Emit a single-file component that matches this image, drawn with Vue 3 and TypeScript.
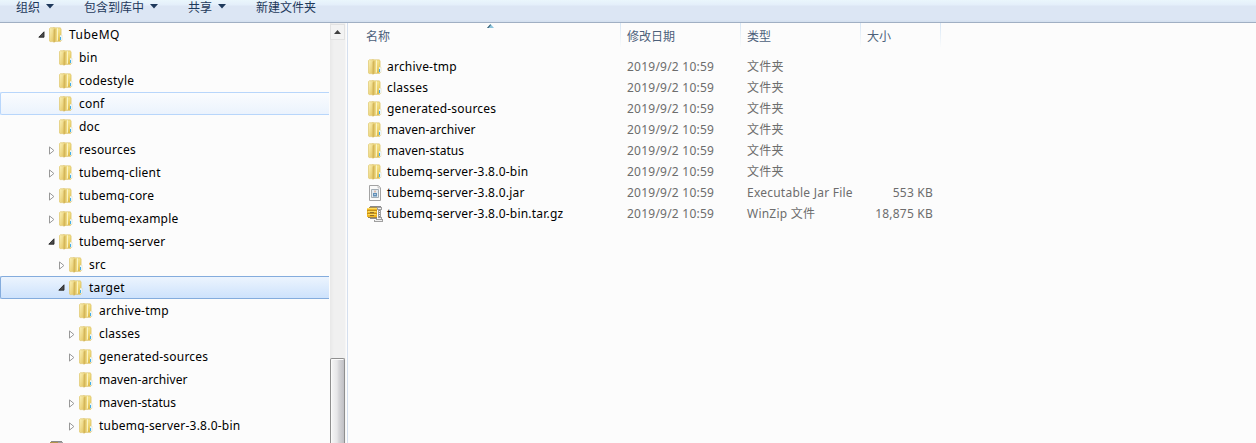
<script setup lang="ts">
interface TreeNode {
  name: string
  level: number
  state?: 'open' | 'closed'
  look?: 'hover' | 'selected'
}
interface FileRow {
  name: string
  icon: 'folder' | 'jar' | 'zip'
  type: string
  size?: string
}

const menus = [
  { label: '组织', arrow: true },
  { label: '包含到库中', arrow: true },
  { label: '共享', arrow: true },
  { label: '新建文件夹', arrow: false },
]

const tree: TreeNode[] = [
  { name: 'TubeMQ', level: 0, state: 'open' },
  { name: 'bin', level: 1 },
  { name: 'codestyle', level: 1 },
  { name: 'conf', level: 1, look: 'hover' },
  { name: 'doc', level: 1 },
  { name: 'resources', level: 1, state: 'closed' },
  { name: 'tubemq-client', level: 1, state: 'closed' },
  { name: 'tubemq-core', level: 1, state: 'closed' },
  { name: 'tubemq-example', level: 1, state: 'closed' },
  { name: 'tubemq-server', level: 1, state: 'open' },
  { name: 'src', level: 2, state: 'closed' },
  { name: 'target', level: 2, state: 'open', look: 'selected' },
  { name: 'archive-tmp', level: 3 },
  { name: 'classes', level: 3, state: 'closed' },
  { name: 'generated-sources', level: 3, state: 'closed' },
  { name: 'maven-archiver', level: 3 },
  { name: 'maven-status', level: 3, state: 'closed' },
  { name: 'tubemq-server-3.8.0-bin', level: 3, state: 'closed' },
]

const columns = ['名称', '修改日期', '类型', '大小']
const date = '2019/9/2 10:59'

const files: FileRow[] = [
  { name: 'archive-tmp', icon: 'folder', type: '文件夹' },
  { name: 'classes', icon: 'folder', type: '文件夹' },
  { name: 'generated-sources', icon: 'folder', type: '文件夹' },
  { name: 'maven-archiver', icon: 'folder', type: '文件夹' },
  { name: 'maven-status', icon: 'folder', type: '文件夹' },
  { name: 'tubemq-server-3.8.0-bin', icon: 'folder', type: '文件夹' },
  { name: 'tubemq-server-3.8.0.jar', icon: 'jar', type: 'Executable Jar File', size: '553 KB' },
  { name: 'tubemq-server-3.8.0-bin.tar.gz', icon: 'zip', type: 'WinZip 文件', size: '18,875 KB' },
]

// Letter tracking by label; hyphenated "maven" names are set tighter than the rest.
function tracking(name: string): string {
  if (name === 'TubeMQ') return 'wide'
  return name.startsWith('maven') ? 'tight' : ''
}
</script>

<template>
  <div class="window">
    <svg class="defs" width="0" height="0">
      <defs>
        <linearGradient id="gBack" x1="0" y1="0" x2="1" y2="1">
          <stop offset="0" stop-color="#fbf2b8" />
          <stop offset="1" stop-color="#e2c35e" />
        </linearGradient>
        <linearGradient id="gRight" x1="0" y1="0" x2="0" y2="1">
          <stop offset="0" stop-color="#f5e591" />
          <stop offset=".6" stop-color="#ebd068" />
          <stop offset="1" stop-color="#dcb846" />
        </linearGradient>
        <linearGradient id="gFlap" x1="0" y1="0" x2="1" y2="0">
          <stop offset="0" stop-color="#c9a84a" />
          <stop offset=".45" stop-color="#dec266" />
          <stop offset="1" stop-color="#f3e08a" />
        </linearGradient>
        <symbol id="folder" viewBox="0 0 14 16">
          <path d="M4 .9h7.2l.8.8v5.8l.7 1v4.8l-.9.9H4z" fill="url(#gRight)" stroke="#dcc05f" stroke-width=".8" />
          <path d="M.5 1.5 1.3.8H5.5v13.8H1L.5 14z" fill="url(#gBack)" stroke="#e2cb78" stroke-width=".8" />
          <path d="M4.7 2.6 8 1.2v12.6l-3.3 1.9z" fill="url(#gFlap)" />
          <path d="M8 1.3h.9v12.5H8z" fill="#fcf6cc" />
          <path d="M11 8.6q.9-1.2 2 0v4.9h-2z" fill="#e9f4f7" />
          <path d="M11 10h1v3h-1z" fill="#45aee6" />
        </symbol>
        <symbol id="jar" viewBox="0 0 16 16">
          <path d="M2.5.5h8.8l2.2 2.2v12.8h-11z" fill="#fafafa" stroke="#a3a3a3" />
          <path d="M11 .8v2.2h2.3" fill="#e5e5e5" stroke="#b5b5b5" stroke-width=".7" />
          <path d="M4.5 4.5h7v8h-7z" fill="#e3eaf0" stroke="#a3adb5" />
          <path d="M6 8h4v3.5H6z" fill="#6290b8" />
          <path d="M7.5 5.5h1v2h-1z" fill="#d58f72" />
          <path d="M7 9h2v1H7z" fill="#a9c6de" />
        </symbol>
        <symbol id="zip" viewBox="0 0 16 16">
          <path d="M3 0h11v1H3z" fill="#8a8a8a" />
          <path d="M2 1h8v1H2z" fill="#b0934a" />
          <path d="M0 2h10v9H0z" fill="#efb622" />
          <path d="M0 2h10v1H0zM1 5h8v1H1zM1 8h8v1H1z" fill="#fcdc62" />
          <path d="M0 4h10v1H0zM0 7h10v1H0z" fill="#c3911b" />
          <path d="M3 6h4v1H3zM3 9h4v1H3z" fill="#91702a" />
          <path d="M1 11h9v1H1z" fill="#9c8450" />
          <path d="M3 12h7v1H3z" fill="#8e8e8e" />
          <path d="M10 1h5v3h-1v7h1v2h1v3H7v-2h2v-1h2V4h-1z" fill="#a0a0a0" />
          <path d="M11 2h3v1h-3zM12 4h1v7h-1zM11 12h3v1h-3zM8 14h7v1H8z" fill="#f0f0f0" />
          <path d="M12.5 4v7" stroke="#888" stroke-dasharray="1 1" />
        </symbol>
      </defs>
    </svg>

    <nav class="toolbar">
      <span v-for="m in menus" :key="m.label" class="menu">
        {{ m.label }}
        <svg v-if="m.arrow" class="drop" width="8" height="5" viewBox="0 0 8 5">
          <path d="M0 0h8L4 4.5z" fill="#1e395b" />
        </svg>
      </span>
    </nav>

    <div class="body">
      <aside class="tree">
        <div v-for="n in tree" :key="n.level + n.name" class="node" :class="['level' + n.level, n.look]">
          <span class="twisty">
            <svg v-if="n.state === 'open'" width="7" height="7" viewBox="0 0 7 7">
              <path d="M6 .8v5.4H.8z" fill="#4a4a4a" stroke="#262626" stroke-width=".9" />
            </svg>
            <svg v-else-if="n.state === 'closed'" class="closed" width="6" height="9" viewBox="0 0 6 9">
              <path d="M.5.9v7.2l4.4-3.6z" fill="#fff" stroke="#989898" />
            </svg>
          </span>
          <svg class="folder" width="14" height="16"><use href="#folder" /></svg>
          <span class="label" :class="tracking(n.name)">{{ n.name }}</span>
        </div>
        <div class="node level0 partial">
          <span class="twisty"></span>
          <svg class="zip" width="16" height="16"><use href="#zip" /></svg>
        </div>
      </aside>

      <div class="scrollbar">
        <div class="up">
          <svg width="7" height="4" viewBox="0 0 7 4"><path d="M0 4 3.5 0 7 4z" fill="#404040" /></svg>
        </div>
        <div class="track"></div>
        <div class="thumb"></div>
      </div>

      <main class="list">
        <header class="row head">
          <span v-for="(c, i) in columns" :key="c" class="col">
            {{ c }}
            <svg v-if="i === 0" class="sort" width="7" height="4" viewBox="0 0 7 4">
              <path d="M0 4 3.5 0 7 4z" fill="#8cc4dd" />
              <path d="M0 4 3.5 0v1.5L1.5 4z" fill="#3c5e72" />
            </svg>
          </span>
        </header>
        <div v-for="f in files" :key="f.name" class="row file">
          <span class="name">
            <svg :class="f.icon" :width="f.icon === 'folder' ? 14 : 16" height="16">
              <use :href="'#' + f.icon" />
            </svg>
            <span class="label" :class="tracking(f.name)">{{ f.name }}</span>
          </span>
          <span class="cell">{{ date }}</span>
          <span class="cell">{{ f.type }}</span>
          <span class="size">{{ f.size }}</span>
        </div>
      </main>
    </div>
  </div>
</template>

<style>
body {
  margin: 0;
  overflow: hidden;
}
</style>

<style scoped>
.window {
  width: 1256px;
  height: 443px;
  overflow: hidden;
  display: flex;
  flex-direction: column;
  background: #fcfcfc;
  font: 12px/16px "Noto Sans", "Open Sans", "Noto Sans CJK SC", sans-serif;
  color: #000;
  white-space: nowrap;
}
.window svg {
  flex: none;
  display: block;
}
.defs {
  position: absolute;
}
.toolbar {
  box-sizing: border-box;
  flex: none;
  height: 23px;
  padding-left: 16px;
  display: flex;
  gap: 30px;
  background: linear-gradient(#eaf6fc 0, #e4effa 5px, #dce6f4 6px, #dce6f4 20px, #d5e1f0 21px);
  border-bottom: 1px solid #a0afc3;
  color: #1e395b;
  font-family: "Noto Sans CJK SC", sans-serif;
  line-height: 14px;
}
.menu {
  display: flex;
  height: 14px;
  align-items: center;
  gap: 6px;
}
.drop {
  margin-top: -2px;
}
.body {
  flex: 1;
  min-height: 0;
  display: flex;
}
.tree {
  width: 330px;
  overflow: hidden;
}
.node {
  box-sizing: border-box;
  width: 329px;
  height: 23px;
  display: flex;
  align-items: center;
  border: 1px solid transparent;
  border-right: 0;
  border-radius: 2px 0 0 2px;
}
.level0 { padding-left: 37px; }
.level1 { padding-left: 47px; }
.level2 { padding-left: 57px; }
.level3 { padding-left: 67px; }
.hover {
  background: linear-gradient(#fafcfe, #ebf3fd);
  border-color: #b8d6fb;
}
.selected {
  background: linear-gradient(#ecf4fe, #cde2fc);
  border-color: #84acdd;
}
.twisty {
  width: 11px;
  flex: none;
}
.closed {
  margin-left: 1px;
  margin-top: 1px;
}
.node .folder {
  margin-right: 6px;
}
.node .zip {
  margin-left: -1px;
}
.label {
  letter-spacing: 0.22px;
}
.label.tight {
  letter-spacing: 0.06px;
}
.label.wide {
  letter-spacing: 0.5px;
}
.scrollbar {
  width: 17px;
  flex: none;
  display: flex;
  flex-direction: column;
  background: linear-gradient(90deg, #e8e8e8, #f0f0f0 4px, #f0f0f0 15px, #fcfcfc 16px);
}
.up {
  box-sizing: border-box;
  width: 15px;
  height: 16px;
  margin-top: 1px;
  display: flex;
  align-items: center;
  justify-content: center;
  background: #f3f3f3;
  border: 1px solid #e2e2e2;
}
.track {
  height: 318px;
}
.thumb {
  box-sizing: border-box;
  width: 15px;
  flex: 1;
  border: 1px solid #8f8f8f;
  border-bottom: 0;
  border-radius: 2px 2px 0 0;
  background: linear-gradient(90deg, #f6f6f6, #e6e6e8 6px, #d5d5d8 8px, #c0c0c5);
  box-shadow: inset 1px 1px #fafafa;
}
.list {
  flex: 1;
  border-left: 1px solid #d5dfee;
}
.row {
  display: grid;
  grid-template-columns: 273px 120px 120px 80px;
}
.head {
  height: 33px;
  color: #4c607a;
}
.col {
  box-sizing: border-box;
  position: relative;
  height: 24px;
  padding: 6px 0 0 6px;
  border-right: 1px solid;
  border-image: linear-gradient(#d5e5f5, #fcfcfc) 1;
}
.col:first-child {
  padding-left: 18px;
}
.sort {
  position: absolute;
  left: 139px;
  top: 1px;
}
.file {
  height: 21px;
  align-items: center;
  color: #6d6d6d;
}
.name {
  display: flex;
  align-items: center;
  padding-left: 20px;
  color: #000;
}
.name .folder {
  margin-right: 5px;
}
.name .jar,
.name .zip {
  margin-left: -1px;
  margin-right: 4px;
}
.cell {
  padding-left: 6px;
  letter-spacing: 0.23px;
}
.size {
  text-align: right;
  padding-right: 8px;
  letter-spacing: 0.22px;
}
</style>
